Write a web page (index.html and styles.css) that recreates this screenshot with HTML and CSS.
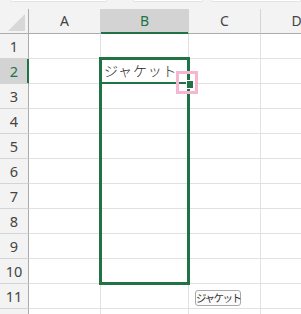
FILE: index.html
```html
<!DOCTYPE html>
<html>
	<head>
		<meta charset="utf-8">
		<title>sheet</title>
		<link rel="stylesheet" href="styles.css">
	</head>
	<body>
		<div class="topbar">
			<span class="box box1"></span>
			<span class="box box2"></span>
			<span class="box box3"></span>
		</div>
		<div class="sheet">
			<div class="corner">
				<svg width="18" height="18" viewBox="0 0 18 18"><polygon points="17,1 17,18 0,18" fill="#d8d8d8"/></svg>
			</div>
			<div class="colhead">A</div>
			<div class="colhead sel">B</div>
			<div class="colhead">C</div>
			<div class="colhead">D</div>

			<div class="rowhead">1</div><div class="cell"></div><div class="cell"></div><div class="cell"></div><div class="cell"></div>
			<div class="rowhead sel">2</div><div class="cell"></div><div class="cell val">ジャケット</div><div class="cell"></div><div class="cell"></div>
			<div class="rowhead">3</div><div class="cell"></div><div class="cell"></div><div class="cell"></div><div class="cell"></div>
			<div class="rowhead">4</div><div class="cell"></div><div class="cell"></div><div class="cell"></div><div class="cell"></div>
			<div class="rowhead">5</div><div class="cell"></div><div class="cell"></div><div class="cell"></div><div class="cell"></div>
			<div class="rowhead">6</div><div class="cell"></div><div class="cell"></div><div class="cell"></div><div class="cell"></div>
			<div class="rowhead">7</div><div class="cell"></div><div class="cell"></div><div class="cell"></div><div class="cell"></div>
			<div class="rowhead">8</div><div class="cell"></div><div class="cell"></div><div class="cell"></div><div class="cell"></div>
			<div class="rowhead">9</div><div class="cell"></div><div class="cell"></div><div class="cell"></div><div class="cell"></div>
			<div class="rowhead">10</div><div class="cell"></div><div class="cell"></div><div class="cell"></div><div class="cell"></div>
			<div class="rowhead">11</div><div class="cell"></div><div class="cell"></div><div class="cell"></div><div class="cell"></div>
			<div class="rowhead"></div><div class="cell"></div><div class="cell"></div><div class="cell"></div><div class="cell"></div>

			<!-- 選択範囲 B2:B10 -->
			<div class="range"></div>
			<div class="active-line"></div>
			<div class="marker"><span class="handle"></span></div>
			<div class="hint">ジャケット</div>
		</div>
	</body>
</html>
```

FILE: styles.css
```css
* {
	margin: 0;
	padding: 0;
	box-sizing: border-box;
}

body {
	background: #ffffff;
	overflow: hidden;
	height: 314px;
	font-family: "Noto Sans", "Noto Sans CJK JP", sans-serif;
}

.topbar {
	height: 9px;
	background: #f3f3f3;
	position: relative;
	overflow: hidden;
}

.topbar .box {
	position: absolute;
	top: 0;
	height: 2px;
	background: #ffffff;
	border: 1px solid #e4e4e4;
	border-top: none;
	border-radius: 0 0 3px 3px;
}

.box1 {
	left: 10px;
	width: 97px;
}

.box2 {
	left: 133px;
	width: 70px;
}

.box3 {
	left: 211px;
	width: 90px;
}

.sheet {
	position: relative;
	width: 301px;
	height: 305px;
	overflow: hidden;
	display: grid;
	grid-template-columns: 29px 72px 88px 72px 72px;
	grid-auto-rows: 25px;
}

.corner {
	background: #f3f3f3;
	border-right: 1px solid #ababab;
	border-bottom: 1px solid #ababab;
	position: relative;
}

.corner svg {
	position: absolute;
	right: 2px;
	bottom: 2px;
}

.colhead {
	background: #f3f3f3;
	border-right: 1px solid #d4d4d4;
	border-bottom: 1px solid #ababab;
	color: #444444;
	font-size: 14px;
	line-height: 24px;
	text-align: center;
}

.colhead.sel {
	background: #d3d3d3;
	color: #217346;
	border-bottom-color: #217346;
	box-shadow: inset 0 -1px 0 #217346;
}

.rowhead {
	background: #f3f3f3;
	border-right: 1px solid #ababab;
	border-bottom: 1px solid #d4d4d4;
	color: #444444;
	font-size: 14.5px;
	line-height: 24px;
	text-align: center;
}

.rowhead.sel {
	background: #d3d3d3;
	color: #217346;
	border-right-color: #217346;
	box-shadow: inset -1px 0 0 #217346;
}

.cell {
	border-right: 1px solid #e1e1e1;
	border-bottom: 1px solid #e1e1e1;
}

.cell.val {
	font-family: "Noto Sans CJK JP", sans-serif;
	font-weight: 300;
	font-size: 14px;
	letter-spacing: 0.8px;
	line-height: 22px;
	padding-left: 3px;
	color: #1f1f1f;
	white-space: nowrap;
}

.range {
	position: absolute;
	left: 99px;
	top: 48px;
	width: 91px;
	height: 228px;
	border: 3px solid #217346;
}

.active-line {
	position: absolute;
	left: 99px;
	top: 73px;
	width: 90px;
	height: 2px;
	background: #217346;
}

.marker {
	position: absolute;
	left: 176px;
	top: 62px;
	width: 22px;
	height: 23px;
	border: 3px solid #f5b7cf;
}

.marker .handle {
	position: absolute;
	left: 8px;
	top: 7px;
	width: 6px;
	height: 7px;
	background: #217346;
	outline: 1px solid #ffffff;
}

.hint {
	position: absolute;
	left: 195px;
	top: 281px;
	width: 46px;
	height: 16px;
	padding-top: 1px;
	border: 1px solid #a9a9a9;
	border-radius: 3px;
	background: #fbfbfb;
	font-family: "Noto Sans CJK JP", sans-serif;
	font-size: 10.5px;
	letter-spacing: -1.5px;
	line-height: 12px;
	color: #333333;
	text-align: center;
	white-space: nowrap;
}
```
